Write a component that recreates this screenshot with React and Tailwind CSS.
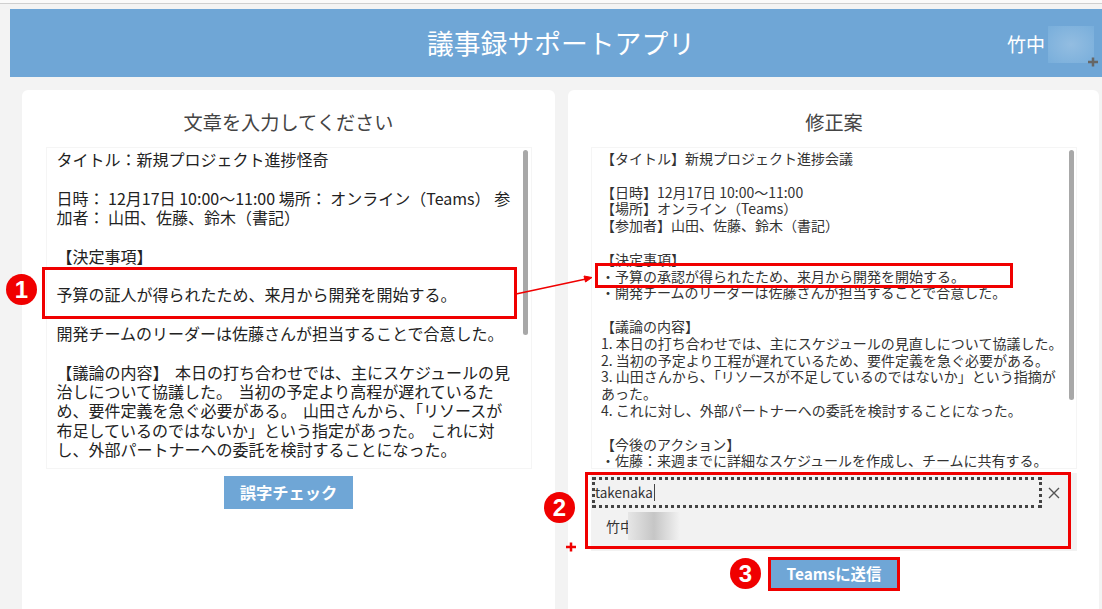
import React from "react";

const font = { fontFamily: '"Noto Sans CJK JP", "Noto Sans", sans-serif' };

const leftLines = [
  "タイトル：新規プロジェクト進捗怪奇",
  "",
  "日時： 12月17日 10:00～11:00 場所： オンライン（Teams） 参",
  "加者： 山田、佐藤、鈴木（書記）",
  "",
  "【決定事項】",
  "",
  "予算の証人が得られたため、来月から開発を開始する。",
  "",
  "開発チームのリーダーは佐藤さんが担当することで合意した。",
  "",
];

const leftDiscussion = [
  "【議論の内容】 本日の打ち合わせでは、主にスケジュールの見",
  "治しについて協議した。 当初の予定より高程が遅れているた",
  "め、要件定義を急ぐ必要がある。 山田さんから、「リソースが",
  "布足しているのではないか」という指定があった。 これに対",
  "し、外部パートナーへの委託を検討することになった。",
];

const rightLines = [
  "【タイトル】新規プロジェクト進捗会議",
  "",
  "【日時】12月17日 10:00～11:00",
  "【場所】オンライン（Teams）",
  "【参加者】山田、佐藤、鈴木（書記）",
  "",
  "【決定事項】",
  "・予算の承認が得られたため、来月から開発を開始する。",
  "・開発チームのリーダーは佐藤さんが担当することで合意した。",
  "",
  "【議論の内容】",
  "1. 本日の打ち合わせでは、主にスケジュールの見直しについて協議した。",
  "2. 当初の予定より工程が遅れているため、要件定義を急ぐ必要がある。",
  "3. 山田さんから、「リソースが不足しているのではないか」という指摘が",
  "あった。",
  "4. これに対し、外部パートナーへの委託を検討することになった。",
  "",
  "【今後のアクション】",
  "・佐藤：来週までに詳細なスケジュールを作成し、チームに共有する。",
];

function Lines({ lines }) {
  return lines.map((l, i) => (
    <div key={i} className="h-[1lh] whitespace-nowrap">
      {l === "" ? "\u00a0" : l}
    </div>
  ));
}

function Badge({ n, className }) {
  return (
    <div
      className={`absolute flex h-[31px] w-[31px] items-center justify-center rounded-full bg-[#f00000] text-[24px] font-bold leading-none text-white ${className}`}
      style={{ fontFamily: '"Liberation Sans", sans-serif' }}
    >
      {n}
    </div>
  );
}

export default function App() {
  return (
    <div className="relative h-[609px] w-[1102px] overflow-hidden bg-[#f3f3f3] text-[#333]" style={font}>
      <div className="h-[4px] border-b border-[#cfcfcf] bg-[#fafafa]" />
      <div className="pl-[10px] pt-[5px]">
        <header className="relative flex h-[68px] items-center justify-center bg-[#6fa6d6] pl-[10px] text-white">
          <h1 className="text-[26.8px] font-normal leading-none">議事録サポートアプリ</h1>
          <div className="absolute left-[997px] top-[17px] flex items-start">
            <span className="text-[19px] leading-[36px]">竹中</span>
            <div className="ml-[3px] h-[37px] w-[46px] bg-radial from-[#93bde1] to-[#78aedb]" />
          </div>
        </header>
      </div>
      <main className="grid grid-cols-[533px_531px] gap-x-[13px] pl-[22px] pt-[13px]">
        <section className="flex h-[540px] flex-col items-center rounded-t-[6px] bg-white px-[24px] pt-[20px]">
          <h2 className="h-[37px] text-[19.2px] font-normal leading-[24px] text-[#444]">文章を入力してください</h2>
          <div className="flex h-[322px] w-[486px] justify-between border border-[#f5f5f5] pl-[10px] pr-[3px] pt-[2px] text-[16px] leading-[19.35px] text-[#222]">
            <div>
              <Lines lines={leftLines} />
              <div className="[word-spacing:3px]">
                <Lines lines={leftDiscussion} />
              </div>
            </div>
            <div className="h-[185px] w-[5px] rounded-full bg-[#a8a8a8]" />
          </div>
          <button className="mt-[7px] h-[33px] w-[129px] bg-[#6fa6d6] text-[16.3px] font-bold text-white">誤字チェック</button>
        </section>
        <section className="flex h-[540px] flex-col rounded-t-[6px] bg-white pl-[23px] pr-[22px] pt-[20px]">
          <h2 className="h-[37px] text-center text-[19.2px] font-normal leading-[24px] text-[#444]">修正案</h2>
          <div className="flex h-[322px] justify-between border border-[#f5f5f5] pl-[9px] pr-[2px] pt-[2px] text-[14px] leading-[16.8px] text-[#333]">
            <div>
              <Lines lines={rightLines} />
            </div>
            <div className="h-[250px] w-[5px] rounded-full bg-[#a8a8a8]" />
          </div>
          <div className="mt-[4px] h-[78px] bg-[#f2f2f2] pl-[1px] pt-[4px]">
            <div className="flex items-center">
              <div className="flex h-[31px] w-[450px] items-center border-[3px] border-dotted border-[#444] text-[13.5px]">
                takenaka<span className="ml-px h-[17px] w-px bg-[#444]" />
              </div>
              <svg className="ml-[6px]" width="12" height="12" viewBox="0 0 12 12" stroke="#555" strokeWidth="1.4">
                <path d="M1 1l10 10M11 1L1 11" />
              </svg>
            </div>
            <div className="flex items-center pl-[14px] pt-[4px] text-[14px]">
              竹中
              <div className="ml-[-6px] h-[28px] w-[52px] bg-linear-to-r from-[#e6e6e6] via-[#c6c6c6] to-[#f2f2f2]" />
            </div>
          </div>
          <button className="mx-auto mt-[6px] h-[34px] w-[132px] border-[3px] border-[#f00000] bg-[#6fa6d6] text-[15.4px] font-bold text-white">
            Teamsに送信
          </button>
        </section>
      </main>

      {/* annotation overlays */}
      <div className="absolute left-[42px] top-[267px] h-[52px] w-[475px] border-[3px] border-[#f00000]" />
      <div className="absolute left-[595px] top-[263px] h-[25px] w-[418px] border-[3px] border-[#f00000]" />
      <div className="absolute left-[585px] top-[472px] h-[77px] w-[486px] border-[3px] border-[#f00000]" />
      <svg className="absolute left-0 top-0" width="1102" height="609" fill="none">
        <path d="M516 294L586 279" stroke="#f00000" strokeWidth="1.5" />
        <path d="M592 277.5L584 276L585.5 282Z" fill="#f00000" stroke="#f00000" />
        <path d="M566 547h10M571 542.5v9" stroke="#f00000" strokeWidth="2.5" />
        <path d="M1088 62h10M1093 57.5v9" stroke="#666" strokeWidth="2.5" />
      </svg>
      <Badge n="1" className="left-[6px] top-[274px]" />
      <Badge n="2" className="left-[544px] top-[492px]" />
      <Badge n="3" className="left-[730px] top-[558px]" />
    </div>
  );
}
